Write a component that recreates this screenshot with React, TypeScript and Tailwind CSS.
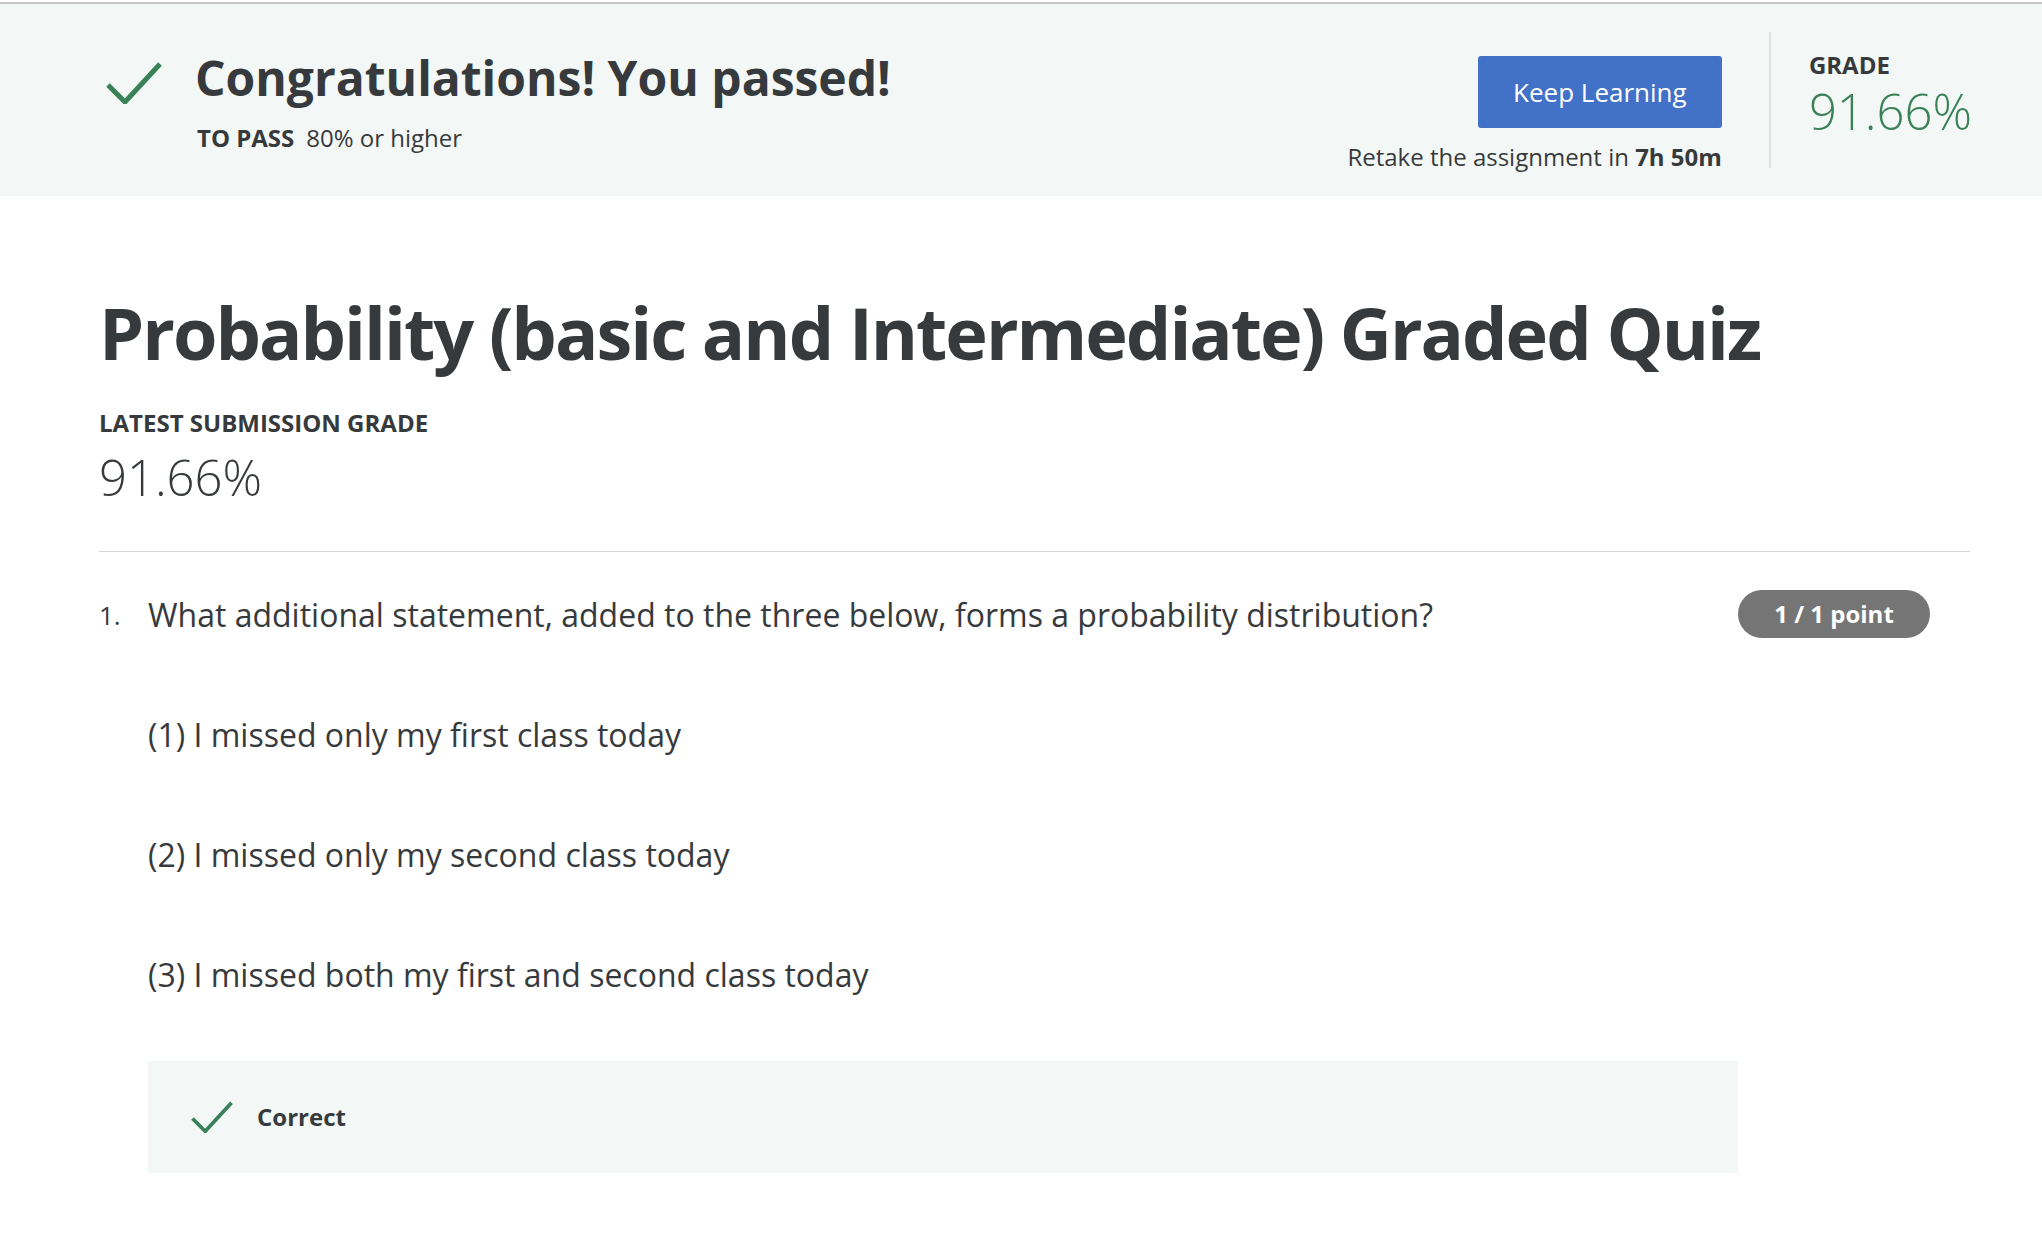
import React from "react";

const font = { fontFamily: '"Open Sans", "Liberation Sans", sans-serif' };

function Check({ className }: { className?: string }) {
  return (
    <svg viewBox="0 0 56 42" className={className} fill="none">
      <polyline points="2,23 19,40 54,2" stroke="#3a8157" strokeWidth="5" strokeLinecap="butt" strokeLinejoin="miter" />
    </svg>
  );
}

export default function App() {
  return (
    <div className="min-h-[1256px] w-[2042px] bg-white text-[#373a3c]" style={font}>
      <div className="pt-[2px]">
        <div className="h-[2px] bg-[#c4c4c4]" />
      </div>
      <header className="flex h-[192px] items-start bg-[#f3f8f6] pl-[106px] pr-[70px]">
        <div className="flex flex-1 items-start">
          <Check className="mt-[58px] h-[42px] w-[56px] shrink-0" />
          <div className="ml-[33px] mt-[42px]">
            <h1 className="text-[48px] font-bold leading-[64px]">Congratulations! You passed!</h1>
            <div className="mt-[12px] pl-[2px] text-[24px] leading-[32px]">
              <span className="font-bold">TO PASS</span>
              <span className="ml-[12px]">80% or higher</span>
            </div>
          </div>
        </div>
        <div className="mt-[52px] flex flex-col items-end">
          <button className="flex h-[72px] w-[244px] items-center justify-center rounded-[3px] bg-[#4271c8] text-[26px] leading-[34px] text-white">
            Keep Learning
          </button>
          <div className="mt-[13px] text-[24px] leading-[32px]">
            Retake the assignment in <span className="font-bold">7h 50m</span>
          </div>
        </div>
        <div className="ml-[47px] mt-[28px] h-[136px] w-[2px] bg-[#e1e3e3]" />
        <div className="ml-[38px] mt-[46px] flex flex-col">
          <div className="text-[24px] font-bold leading-[30px]">GRADE</div>
          <div className="mt-[1px] text-[49px] font-light leading-[60px] text-[#3a8157]">91.66%</div>
        </div>
      </header>

      <main className="px-[99px]">
        <h2 className="mt-[88px] text-[72px] font-bold leading-[96px] tracking-[-2px]">Probability (basic and Intermediate) Graded Quiz</h2>
        <div className="mt-[27px] text-[24px] font-bold leading-[32px]">LATEST SUBMISSION GRADE</div>
        <div className="mt-[6px] text-[49px] font-light leading-[64px]">91.66%</div>
        <div className="mt-[42px] h-[1px] w-[1871px] bg-[#d6d8d8]" />

        <div className="mt-[41px] flex items-start">
          <div className="w-[49px] pt-[6px] text-[26px] leading-[32px]">1.</div>
          <div className="w-[1590px]">
            <div className="text-[32px] leading-[44px]">
              What additional statement, added to the three below, forms a probability distribution?
            </div>
            <div className="mt-[76px] text-[32px] leading-[44px]">(1) I missed only my first class today</div>
            <div className="mt-[76px] text-[32px] leading-[44px]">(2) I missed only my second class today</div>
            <div className="mt-[76px] text-[32px] leading-[44px]">(3) I missed both my first and second class today</div>
            <div className="mt-[64px] flex h-[112px] items-center bg-[#f3f8f6] pl-[43px]">
              <Check className="h-[32px] w-[42px]" />
              <span className="ml-[24px] text-[24px] font-bold leading-[32px]">Correct</span>
            </div>
          </div>
          <div className="mt-[-3px] flex h-[48px] w-[192px] items-center justify-center rounded-full bg-[#757575] text-[24px] font-bold text-white">
            1 / 1 point
          </div>
        </div>
      </main>
    </div>
  );
}
